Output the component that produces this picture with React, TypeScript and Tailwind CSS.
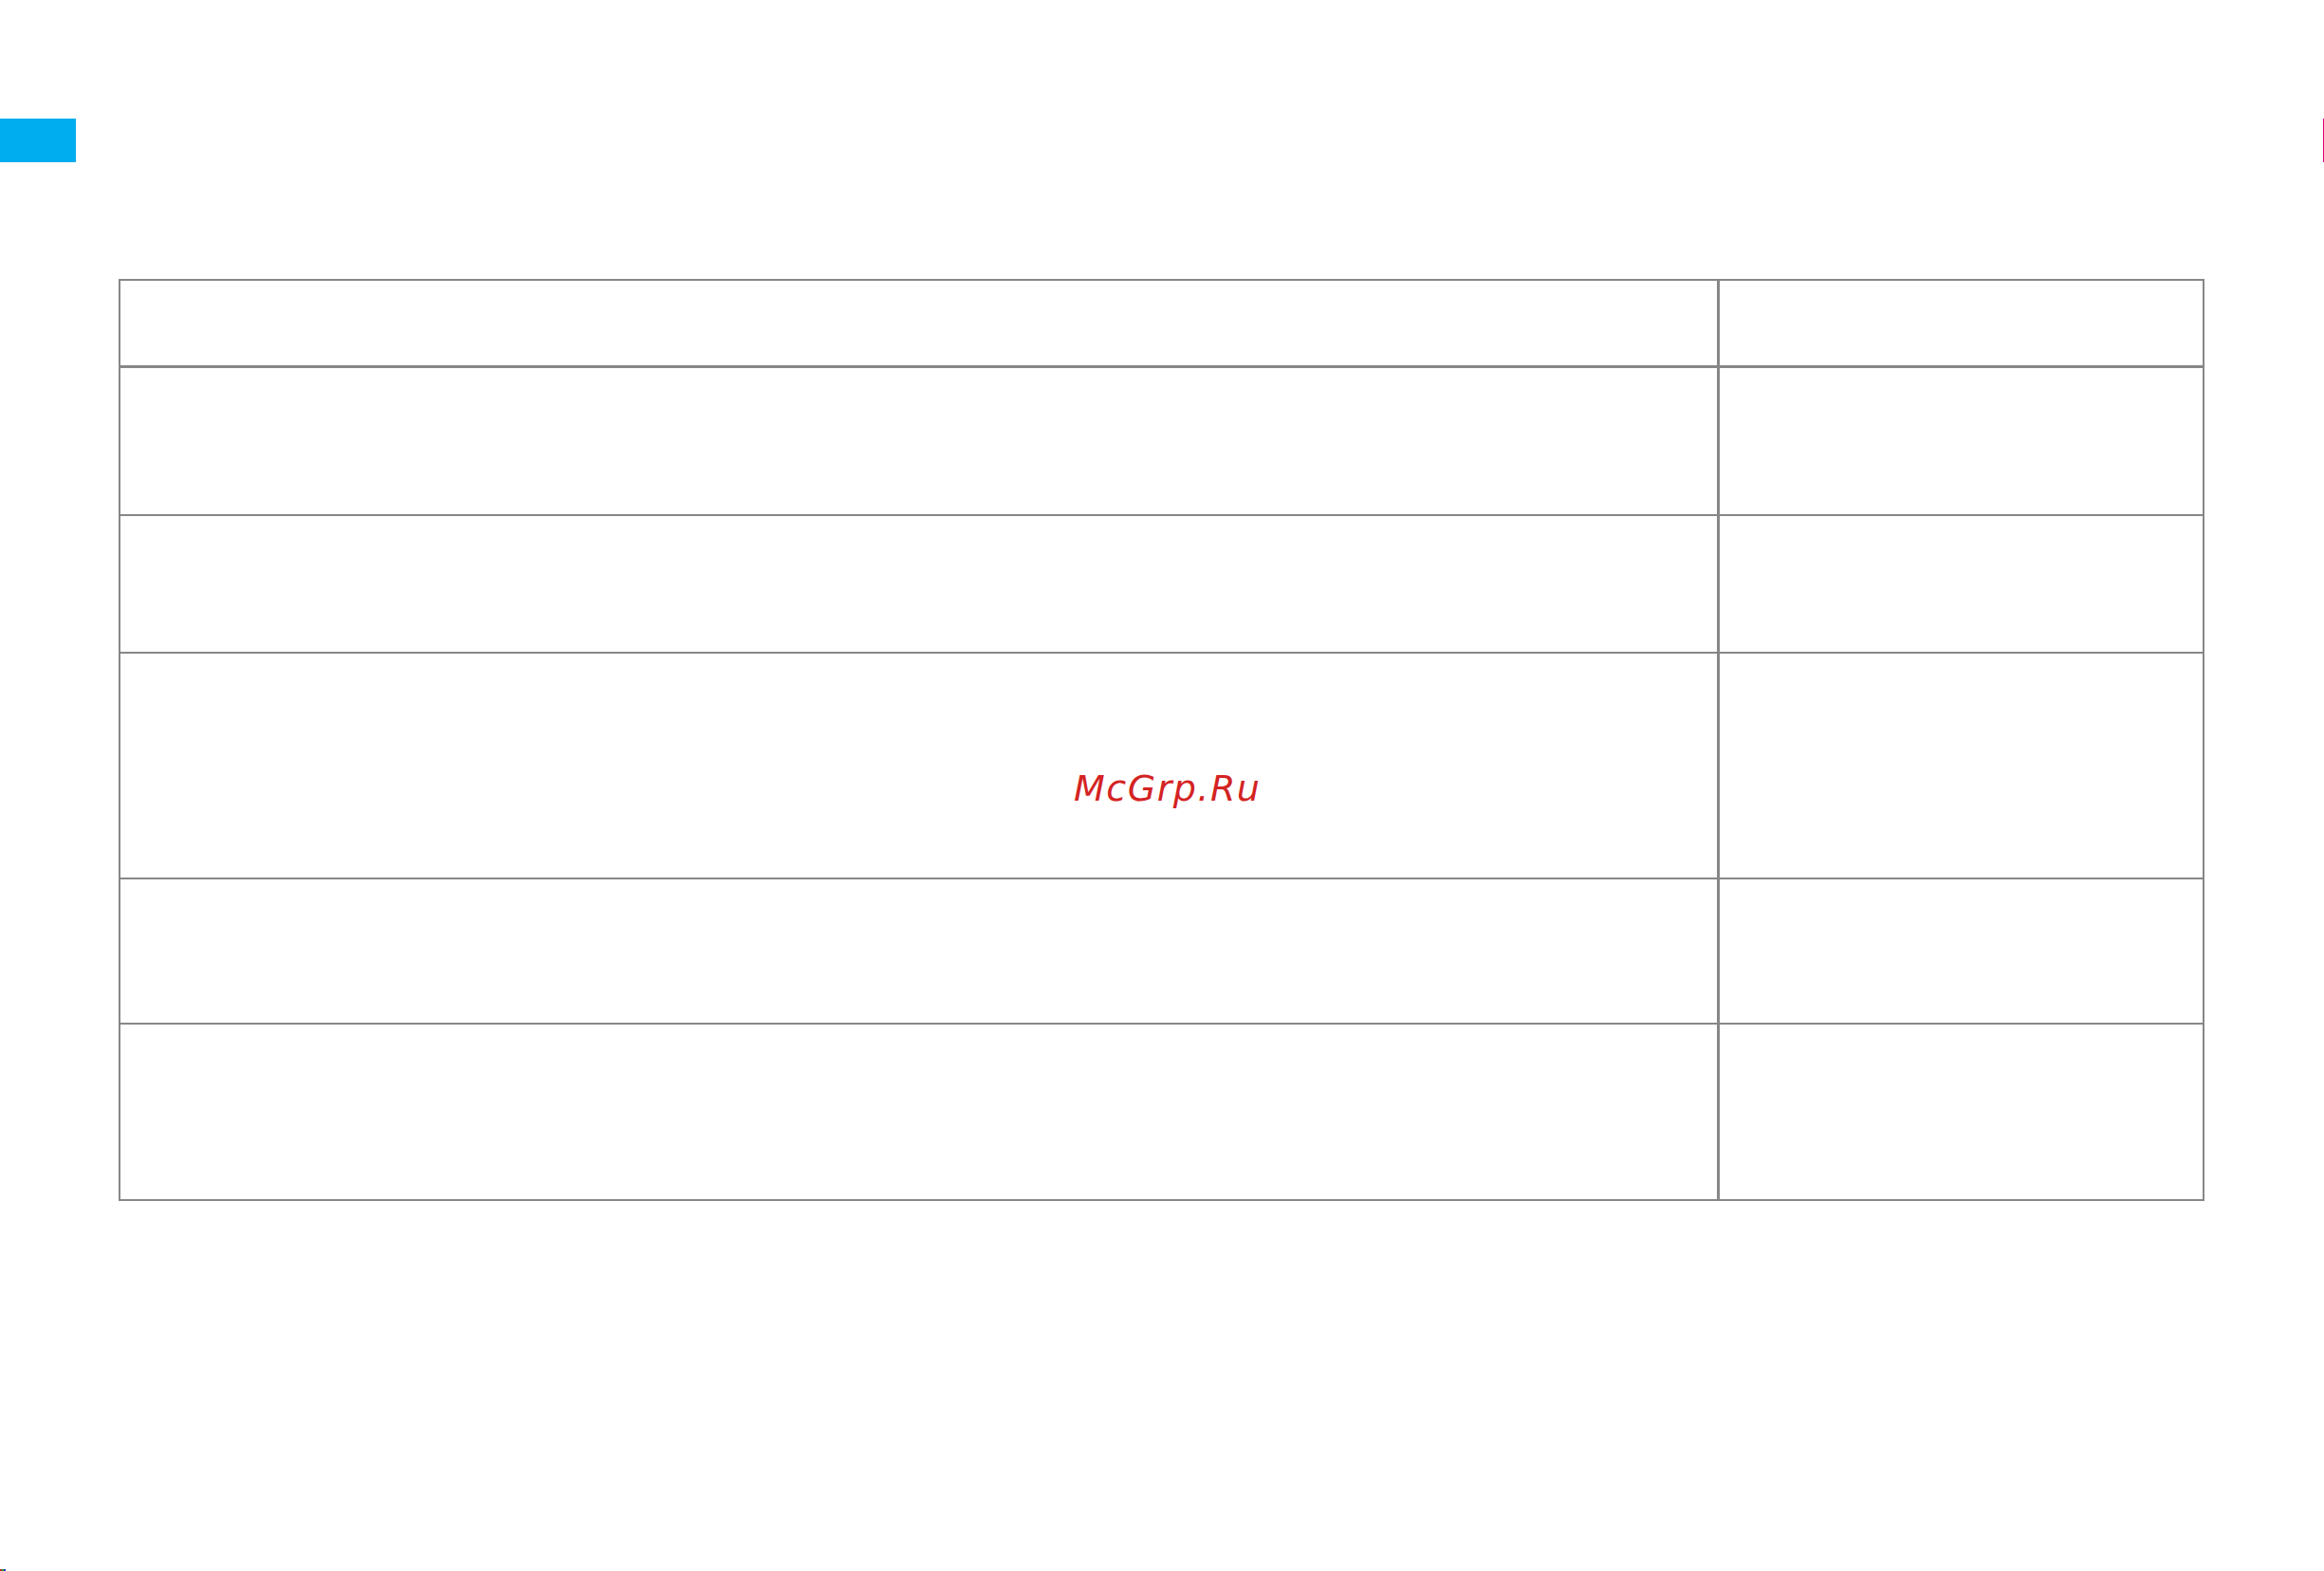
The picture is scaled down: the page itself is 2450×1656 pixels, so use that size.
const rows = [
  { h: "h-[92px]", line: "border-b-[3px]" },
  { h: "h-[156px]", line: "border-b-2" },
  { h: "h-[145px]", line: "border-b-2" },
  { h: "h-[238px]", line: "border-b-2" },
  { h: "h-[153px]", line: "border-b-2" },
  { h: "h-[184px]", line: "" },
];

export default function App() {
  return (
    <div className="relative h-[1656px] w-[2450px] overflow-hidden bg-white font-['DejaVu_Sans',sans-serif]">
      {/* top markers */}
      <div className="mt-[125px] flex h-[46px] items-stretch justify-between">
        <div className="w-[80px] bg-[#00adef]" />
        <div className="w-[1px] bg-[#e6007e]" />
      </div>

      {/* empty table */}
      <div className="ml-[125px] mt-[123px] w-[2199px] border-2 border-[#878787]">
        {rows.map((r, i) => (
          <div key={i} className={`flex ${r.h} ${r.line} border-[#878787]`}>
            <div className="w-[1686px] border-r-[3px] border-[#878787]" />
            <div className="flex-1" />
          </div>
        ))}
      </div>

      {/* watermark */}
      <div className="absolute left-[1132px] top-[812px] text-[38px] italic leading-none tracking-[1.5px] text-[#d42323]">
        McGrp.Ru
      </div>

      <div className="absolute bottom-0 left-0 flex h-[2px]">
        <div className="w-[2px] bg-[#c03030]" />
        <div className="w-[2px] bg-[#30a030]" />
        <div className="w-[2px] bg-[#2040c0]" />
      </div>
    </div>
  );
}
